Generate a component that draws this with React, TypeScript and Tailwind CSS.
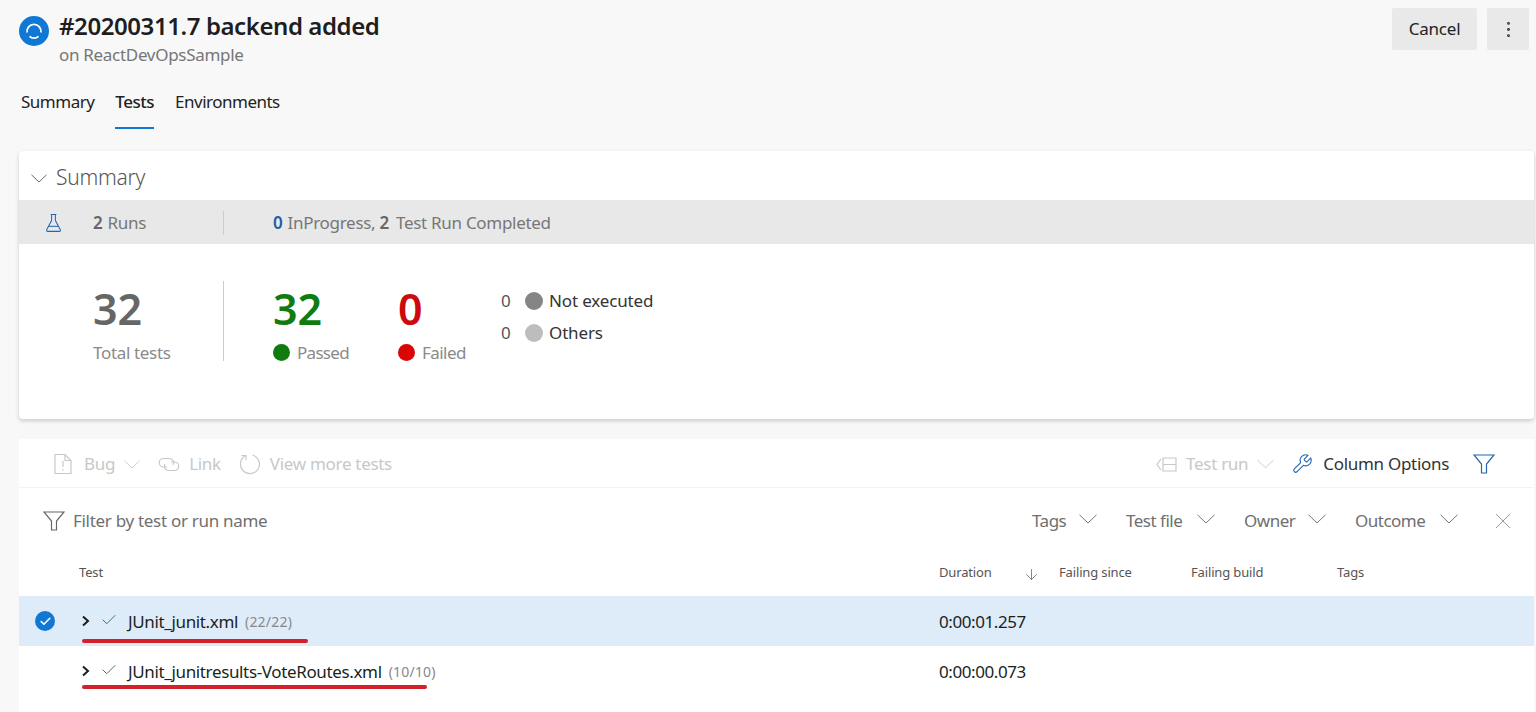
import { Check, ArrowDown, EllipsisVertical } from "lucide-react";

const Chevron = ({ className }: { className?: string }) => (
  <svg width="18" height="10" viewBox="0 0 18 10" fill="none" stroke="currentColor" strokeWidth="1" className={className}>
    <path d="M0.5 0.8 9 9 17.5 0.8" />
  </svg>
);

const FunnelIcon = ({ className }: { className?: string }) => (
  <svg width="22" height="20" viewBox="0 0 22 20" fill="none" stroke="currentColor" strokeWidth="1.2" className={className}>
    <path d="M1 1h20l-7.5 9v9h-5v-9z" />
  </svg>
);

const TestRow = ({ name, count, time, selected }: { name: string; count: string; time: string; selected?: boolean }) => (
  <div className={`relative flex h-[50px] items-center ${selected ? "bg-[#deecf9]" : "bg-white"}`}>
    <div className="flex w-[60px] pl-[16px]">
      {selected && (
        <span className="flex h-[20px] w-[20px] items-center justify-center rounded-full bg-[#0f78d4]">
          <Check size={13} strokeWidth={3} className="text-white" />
        </span>
      )}
    </div>
    <svg width="12" height="14" viewBox="0 0 12 14" fill="none" stroke="#1b1b1b" strokeWidth="2" className="-mt-[1px] ml-[1px]">
      <path d="M3 2.5 8 7l-5 4.5" />
    </svg>
    <Check size={18} strokeWidth={1.3} className="-mt-[2px] ml-[8px] text-[#2c7d4a]" />
    <span className="ml-[10px] mt-[1px] text-[17px] tracking-[-0.36px] text-[#201f1e]">{name}</span>
    <span className="ml-[7px] mt-[1px] text-[14px] tracking-[0.2px] text-[#8a8886]">{count}</span>
    <span className="absolute left-[920px] mt-[1px] text-[17px] tracking-[-0.42px] text-[#201f1e]">{time}</span>
  </div>
);

const FilterChip = ({ label, width }: { label: string; width: string }) => (
  <div className={`flex items-center justify-between ${width}`}>
    <span className="text-[17px] tracking-[-0.5px] text-[#6f6f6f]">{label}</span>
    <Chevron className="-mt-[3px] text-[#777]" />
  </div>
);

export default function App() {
  return (
    <div className="h-[712px] w-[1536px] overflow-hidden bg-[#f8f8f8] font-['Noto_Sans',sans-serif]">
      {/* header */}
      <div className="flex h-[80px] items-start justify-between pl-[19px] pr-[7px] pt-[8px]">
        <div className="flex">
          <div className="mt-[8px] flex h-[30px] w-[30px] items-center justify-center rounded-full bg-[#0f78d4]">
            <svg width="20" height="20" viewBox="0 0 20 20" fill="none" stroke="white" strokeWidth="1.8">
              <path d="M3.1 11.5A7 7 0 1 1 16.9 11.5" />
              <path d="M14.5 15.4A7 7 0 0 1 5.5 15.4" />
            </svg>
          </div>
          <div className="ml-[10px]">
            <div className="text-[24px] font-semibold leading-[35px] tracking-[-0.42px] text-[#1e1e1e]">#20200311.7 backend added</div>
            <div className="mt-[1px] text-[17px] leading-[22px] tracking-[-0.3px] text-[#767676]">on ReactDevOpsSample</div>
          </div>
        </div>
        <div className="flex gap-[10px]">
          <button className="h-[42px] w-[85px] rounded-[2px] bg-[#e9e9e9] text-[17px] tracking-[-0.2px] text-[#222]">Cancel</button>
          <button className="flex h-[42px] w-[42px] items-center justify-center rounded-[2px] bg-[#e9e9e9]">
            <EllipsisVertical size={21} strokeWidth={1.3} className="text-[#333]" />
          </button>
        </div>
      </div>

      {/* tabs */}
      <div className="flex h-[49px] gap-[21px] pl-[21px] text-[17px] tracking-[-0.5px] text-[#222]">
        <div className="pt-[9px]">Summary</div>
        <div className="border-b-[2px] border-[#0f78d4] pt-[9px] font-medium">Tests</div>
        <div className="pt-[9px]">Environments</div>
      </div>

      {/* summary card */}
      <div className="ml-[19px] mt-[22px] h-[268px] w-[1515px] rounded-[4px] bg-white shadow-[0_2px_4px_rgba(0,0,0,0.18)]">
        <div className="flex h-[49px] items-center pl-[12px] pt-[5px]">
          <Chevron className="h-[9px] w-[16px] text-[#555]" />
          <span className="ml-[9px] text-[21px] font-light tracking-[-0.25px] text-[#555]">Summary</span>
        </div>
        <div className="flex h-[44px] items-center bg-[#e8e8e8] pt-[1px] text-[17px] tracking-[-0.3px] text-[#777]">
          <svg width="19" height="20" viewBox="0 0 20 20" fill="none" stroke="#2566b0" strokeWidth="1.1" className="ml-[25px]">
            <path d="M7 1h6M8 1v6.5L2.8 17a1.2 1.2 0 0 0 1 1.8h12.4a1.2 1.2 0 0 0 1-1.8L12 7.5V1" />
            <path d="M5.2 13.5h9.6" />
          </svg>
          <span className="ml-[30px] w-[130px]"><b className="mr-[1px] font-semibold text-[#666]">2</b> Runs</span>
          <div className="h-[24px] w-px bg-[#ccc]" />
          <span className="ml-[49px]"><b className="mr-[1px] font-semibold text-[#1d5fa8]">0</b> InProgress, <b className="mr-[3px] font-semibold text-[#666]">2</b> Test Run Completed</span>
        </div>
        <div className="flex pt-[37px]">
          <div className="w-[204px] pl-[74px]">
            <div className="-mt-[1px] text-[43px] font-semibold leading-[58px] text-[#666]">32</div>
            <div className="mt-[2px] text-[17px] tracking-[-0.33px] text-[#8a8a8a]">Total tests</div>
          </div>
          <div className="h-[80px] w-px bg-[#ccc]" />
          <div className="ml-[49px] w-[125px]">
            <div className="-mt-[1px] text-[43px] font-semibold leading-[58px] text-[#107c10]">32</div>
            <div className="mt-[2px] flex items-center gap-[7px] text-[17px] tracking-[-0.7px] text-[#8a8a8a]">
              <span className="h-[17px] w-[17px] rounded-full bg-[#107c10]" />Passed
            </div>
          </div>
          <div className="w-[103px]">
            <div className="-mt-[1px] text-[43px] font-semibold leading-[58px] text-[#cd0b0b]">0</div>
            <div className="mt-[2px] flex items-center gap-[7px] text-[17px] tracking-[-0.55px] text-[#8a8a8a]">
              <span className="h-[17px] w-[17px] rounded-full bg-[#dc0505]" />Failed
            </div>
          </div>
          <div className="mt-[4px] text-[17px] tracking-[-0.15px] text-[#333]">
            <div className="flex h-[32px] items-center">
              <span className="w-[24px] text-[#555]">0</span>
              <span className="mr-[6px] h-[18px] w-[18px] rounded-full bg-[#858585]" />Not executed
            </div>
            <div className="flex h-[32px] items-center">
              <span className="w-[24px] text-[#555]">0</span>
              <span className="mr-[6px] h-[18px] w-[18px] rounded-full bg-[#bdbdbd]" />Others
            </div>
          </div>
        </div>
      </div>

      {/* results card */}
      <div className="ml-[19px] mt-[20px] h-[273px] w-[1515px] bg-white">
        <div className="flex h-[49px] items-center justify-between border-b border-[#f3f3f3] pl-[34px] pr-[39px] pt-[2px] text-[17px] tracking-[-0.3px] text-[#c8c8c8]">
          <div className="flex items-center">
            <svg width="20" height="22" viewBox="0 0 20 22" fill="none" stroke="currentColor" strokeWidth="1.2">
              <path d="M2 1.5h10l6 6v13H2zM12 1.5v6h6M10 8v6M10 16v1.5" />
            </svg>
            <span className="ml-[11px]">Bug</span>
            <Chevron className="ml-[9px] h-[9px] w-[16px]" />
            <svg width="22" height="15" viewBox="0 0 22 15" fill="none" stroke="currentColor" strokeWidth="1.2" className="ml-[18px]">
              <path d="M9 10H5.5a4.2 4.2 0 0 1 0-8.5h6a4.2 4.2 0 0 1 3.5 6.5" />
              <path d="M13 5h3.5a4.2 4.2 0 0 1 0 8.5h-6A4.2 4.2 0 0 1 7 7" />
            </svg>
            <span className="ml-[9px]">Link</span>
            <svg width="22" height="22" viewBox="0 0 22 22" fill="none" stroke="currentColor" strokeWidth="1.2" className="ml-[18px]">
              <path d="M7 2.5A9.5 9.5 0 1 0 13.5 2" />
              <path d="M7 7V2.5H2.5" />
            </svg>
            <span className="ml-[9px]">View more tests</span>
          </div>
          <div className="flex items-center">
            <svg width="21" height="15" viewBox="0 0 21 15" fill="none" stroke="currentColor" strokeWidth="1.2" className="mr-[9px]">
              <path d="M7 1h13v13H7zM7 7.5h13M5 2 1 7.5 5 13" />
            </svg>
            <span className="mr-[9px]">Test run</span>
            <Chevron className="h-[10px] w-[17px]" />
            <svg width="22" height="22" viewBox="0 0 24 24" fill="none" stroke="#2566b0" strokeWidth="1.2" className="ml-[17px]">
              <path d="M14.7 6.3a1 1 0 0 0 0 1.4l1.6 1.6a1 1 0 0 0 1.4 0l3.77-3.77a6 6 0 0 1-7.94 7.94l-6.91 6.91a2.12 2.12 0 0 1-3-3l6.91-6.91a6 6 0 0 1 7.94-7.94z" />
            </svg>
            <span className="ml-[10px] text-[#333]">Column Options</span>
            <FunnelIcon className="ml-[24px] text-[#2566b0]" />
          </div>
        </div>
        <div className="flex h-[63px] items-center justify-between pl-[24px] pr-[23px] pt-[2px]">
          <div className="flex items-center gap-[8px]">
            <FunnelIcon className="text-[#666]" />
            <span className="text-[17px] tracking-[-0.3px] text-[#6f6f6f]">Filter by test or run name</span>
          </div>
          <div className="flex items-center gap-[29px]">
            <FilterChip label="Tags" width="w-[65px]" />
            <FilterChip label="Test file" width="w-[89px]" />
            <FilterChip label="Owner" width="w-[82px]" />
            <FilterChip label="Outcome" width="w-[103px]" />
            <svg width="16" height="16" viewBox="0 0 16 16" fill="none" stroke="#999" strokeWidth="1" className="ml-[8px]">
              <path d="M1 1l14 14M15 1 1 15" />
            </svg>
          </div>
        </div>
        <div className="flex h-[45px] items-center pb-[1px] text-[13px] tracking-[-0.15px] text-[#555]">
          <div className="ml-[60px] w-[860px]">Test</div>
          <div className="w-[84px]">Duration</div>
          <ArrowDown size={17} strokeWidth={1} className="mt-[2px] text-[#555]" />
          <div className="ml-[19px] w-[132px]">Failing since</div>
          <div className="w-[146px]">Failing build</div>
          <div>Tags</div>
        </div>
        <TestRow name="JUnit_junit.xml" count="(22/22)" time="0:00:01.257" selected />
        <TestRow name="JUnit_junitresults-VoteRoutes.xml" count="(10/10)" time="0:00:00.073" />
        {/* red annotation strokes on the screenshot */}
        <div className="absolute left-[82px] top-[639px] h-[4px] w-[226px] rounded-full bg-[#d3202a]" />
        <div className="absolute left-[82px] top-[685px] h-[4px] w-[345px] rounded-full bg-[#d3202a]" />
      </div>
    </div>
  );
}
